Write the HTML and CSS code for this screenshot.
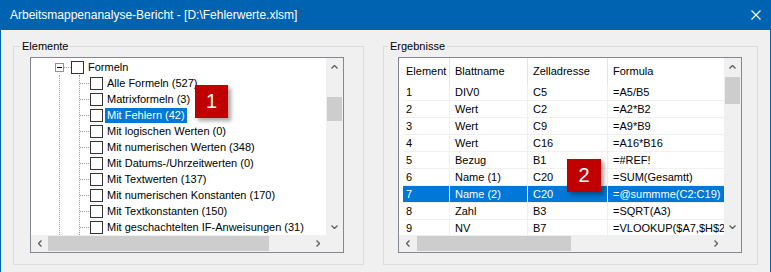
FILE: index.html
```html
<!DOCTYPE html>
<html lang="de">
<head>
<meta charset="UTF-8" />
<title>Arbeitsmappenanalyse-Bericht</title>
<link rel="stylesheet" href="styles.css">
</head>
<body>

<div class="window">
  <div class="titlebar">
    <span class="title">Arbeitsmappenanalyse-Bericht - [D:\Fehlerwerte.xlsm]</span>
    <svg class="close" width="10" height="10" viewBox="0 0 10 10"><path d="M0.5 0.5 L9.5 9.5 M9.5 0.5 L0.5 9.5" stroke="#fff" stroke-width="1.1" fill="none"/></svg>
  </div>

  <div class="content">
    <!-- left: tree of elements -->
    <fieldset class="group group-elements">
      <legend>Elemente</legend>
      <div class="tree-view">
        <div class="tree-body">
          <div class="node root"><span class="expander"></span><span class="branch"></span><span class="check"></span><span class="label">Formeln</span></div>
          <div class="level">
            <ul class="children">
              <li class="node"><span class="branch"></span><span class="check"></span><span class="label">Alle Formeln (527)</span></li>
              <li class="node"><span class="branch"></span><span class="check"></span><span class="label">Matrixformeln (3)</span></li>
              <li class="node"><span class="branch"></span><span class="check"></span><span class="label selected">Mit Fehlern (42)</span></li>
              <li class="node"><span class="branch"></span><span class="check"></span><span class="label">Mit logischen Werten (0)</span></li>
              <li class="node"><span class="branch"></span><span class="check"></span><span class="label">Mit numerischen Werten (348)</span></li>
              <li class="node"><span class="branch"></span><span class="check"></span><span class="label">Mit Datums-/Uhrzeitwerten (0)</span></li>
              <li class="node"><span class="branch"></span><span class="check"></span><span class="label">Mit Textwerten (137)</span></li>
              <li class="node"><span class="branch"></span><span class="check"></span><span class="label">Mit numerischen Konstanten (170)</span></li>
              <li class="node"><span class="branch"></span><span class="check"></span><span class="label">Mit Textkonstanten (150)</span></li>
              <li class="node"><span class="branch"></span><span class="check"></span><span class="label">Mit geschachtelten IF-Anweisungen (31)</span></li>
            </ul>
          </div>
        </div>
        <div class="scroll-v tree-v">
          <span class="arrow"><svg width="7" height="4" viewBox="0 0 7 4"><polyline points="0.5,3.5 3.5,0.5 6.5,3.5" /></svg></span>
          <span class="track"><span class="thumb"></span></span>
          <span class="arrow"><svg width="7" height="4" viewBox="0 0 7 4"><polyline points="0.5,0.5 3.5,3.5 6.5,0.5" /></svg></span>
        </div>
        <div class="scroll-h tree-h">
          <span class="arrow"><svg width="4" height="7" viewBox="0 0 4 7"><polyline points="3.5,0.5 0.5,3.5 3.5,6.5" /></svg></span>
          <span class="track"><span class="thumb"></span></span>
          <span class="arrow"><svg width="4" height="7" viewBox="0 0 4 7"><polyline points="0.5,0.5 3.5,3.5 0.5,6.5" /></svg></span>
        </div>
        <div class="corner"></div>
        <div class="badge badge-1">1</div>
      </div>
    </fieldset>

    <!-- right: result grid -->
    <fieldset class="group group-results">
      <legend>Ergebnisse</legend>
      <div class="grid-view">
        <div class="grid-body">
          <table class="results">
            <thead>
              <tr><th class="c-el">Element</th><th class="c-sheet">Blattname</th><th class="c-cell">Zelladresse</th><th class="c-form">Formula</th></tr>
            </thead>
            <tbody>
              <tr><td>1</td><td>DIV0</td><td>C5</td><td>=A5/B5</td></tr>
              <tr><td>2</td><td>Wert</td><td>C2</td><td>=A2*B2</td></tr>
              <tr><td>3</td><td>Wert</td><td>C9</td><td>=A9*B9</td></tr>
              <tr><td>4</td><td>Wert</td><td>C16</td><td>=A16*B16</td></tr>
              <tr><td>5</td><td>Bezug</td><td>B1</td><td>=#REF!</td></tr>
              <tr><td>6</td><td>Name (1)</td><td>C20</td><td>=SUM(Gesamtt)</td></tr>
              <tr class="selected"><td>7</td><td>Name (2)</td><td>C20</td><td>=@summme(C2:C19)</td></tr>
              <tr><td>8</td><td>Zahl</td><td>B3</td><td>=SQRT(A3)</td></tr>
              <tr><td>9</td><td>NV</td><td>B7</td><td>=VLOOKUP($A7,$H$2:$I$9,2,0)</td></tr>
            </tbody>
          </table>
        </div>
        <div class="scroll-v grid-v">
          <span class="arrow"><svg width="7" height="4" viewBox="0 0 7 4"><polyline points="0.5,3.5 3.5,0.5 6.5,3.5" /></svg></span>
          <span class="track"><span class="thumb"></span></span>
          <span class="arrow"><svg width="7" height="4" viewBox="0 0 7 4"><polyline points="0.5,0.5 3.5,3.5 6.5,0.5" /></svg></span>
        </div>
        <div class="scroll-h grid-h">
          <span class="arrow"><svg width="4" height="7" viewBox="0 0 4 7"><polyline points="3.5,0.5 0.5,3.5 3.5,6.5" /></svg></span>
          <span class="track"><span class="thumb"></span></span>
          <span class="arrow"><svg width="4" height="7" viewBox="0 0 4 7"><polyline points="0.5,0.5 3.5,3.5 0.5,6.5" /></svg></span>
        </div>
        <div class="corner"></div>
        <div class="badge badge-2">2</div>
      </div>
    </fieldset>
  </div>
</div>

</body>
</html>
```

FILE: styles.css
```css
/* — window frame — */
body{margin:0;font-family:'Liberation Sans',Arial,sans-serif;font-size:11px;color:#000;background:#f0f0f0;}
.window{width:771px;height:272px;box-sizing:border-box;border:1px solid #0063b1;border-bottom:none;background:#f0f0f0;overflow:hidden;}
.titlebar{
  height:30px;margin:-1px -1px 0;padding:0 10px 0 10px;background:#0063b1;color:#fff;
  display:flex;align-items:center;justify-content:space-between;
}
.title{font-size:12px;line-height:14px;}
.close{display:block;}

/* — group boxes — */
.content{display:flex;gap:19px;padding:9px 12px 0;}
.group{margin:0;padding:4px 19px 11px 16px;border:1px solid #dcdcdc;min-width:0;box-sizing:border-box;}
.group legend{padding:0 2px;margin-left:-10px;line-height:14px;font-size:11px;}
.group-elements{width:351px;}
.group-results{width:375px;padding:4px 15px 11px 14px;}

/* — shared list frame with scrollbars — */
.tree-view,.grid-view{
  position:relative;height:196px;box-sizing:border-box;border:1px solid #828790;background:#fff;
  display:grid;grid-template-columns:1fr 17px;grid-template-rows:1fr 17px;
}
.tree-view{width:314px;}
.grid-view{width:344px;}
.corner{background:#f0f0f0;}

.scroll-v,.scroll-h{display:flex;background:#f0f0f0;}
.scroll-v{flex-direction:column;}
.arrow{flex:0 0 17px;display:flex;align-items:center;justify-content:center;}
.arrow svg{display:block;}
.arrow polyline{fill:none;stroke:#606060;stroke-width:1.4;}
.track{flex:1;display:flex;}
.scroll-v .track{flex-direction:column;}
.thumb{background:#cdcdcd;}
.scroll-v .thumb{margin:0 1px;}
.scroll-h .thumb{margin:1px 0;}
.tree-v .thumb{margin-top:22px;height:24px;}
.tree-h .thumb{width:221px;}
.grid-v .thumb{margin-top:2px;height:27px;}
.grid-h .thumb{margin-left:1px;width:154px;}

/* — tree — */
.tree-body{overflow:hidden;padding:1px 0 0 24px;}
.node{display:flex;align-items:center;height:16px;white-space:nowrap;}
.expander{
  width:9px;height:9px;box-sizing:border-box;border:1px solid #919191;background:#fff;
  display:flex;align-items:center;justify-content:center;
}
.expander::before{content:'';width:5px;height:1px;background:#000;}
.branch{width:7px;height:0;border-top:1px dotted #a0a0a0;}
.check{width:13px;height:13px;box-sizing:border-box;border:1px solid #333;background:#fff;margin-right:2px;}
.label{padding:0 2px;line-height:15px;}
.label.selected{background:#0078d7;color:#fff;}
.level{margin-left:4px;border-left:1px dotted #a0a0a0;}
.children{list-style:none;margin:0 0 0 19px;padding:0;border-left:1px dotted #a0a0a0;}
.children .branch{width:9px;margin-right:1px;}

/* — results grid — */
.grid-body{overflow:hidden;padding-left:4px;}
.results{border-collapse:separate;border-spacing:0;table-layout:fixed;width:385px;}
.results th,.results td{box-sizing:border-box;padding:0 0 0 5px;text-align:left;font-weight:normal;white-space:nowrap;overflow:hidden;}
.results th{height:26px;border-right:1px solid #e5e5e5;}
.results td{height:17px;line-height:16px;border-right:1px solid #f0f0f0;border-bottom:1px solid #f0f0f0;}
.results th:first-child,.results td:first-child{padding-left:3px;}
.results .c-el{width:47px;}
.results .c-sheet{width:78px;}
.results .c-cell{width:80px;}
.results .c-form{width:180px;}
.results tr.selected td{background:#0078d7;color:#fff;}

/* — callout badges — */
.badge{
  position:absolute;width:33px;height:33px;background:#c00000;color:#fff;
  font-size:20px;line-height:33px;text-align:center;box-shadow:3px 3px 4px rgba(0,0,0,.35);
}
.badge-1{left:164px;top:27px;}
.badge-2{left:168px;top:101px;width:34px;}
```
